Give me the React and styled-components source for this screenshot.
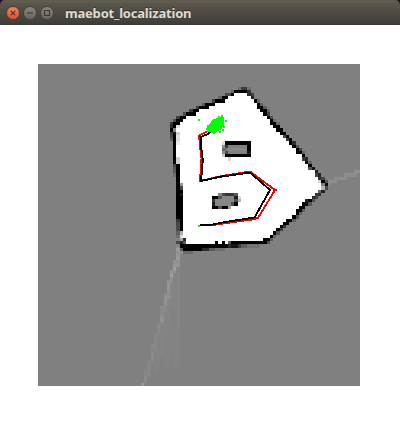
import React from "react";
import styled, { createGlobalStyle } from "styled-components";

const GlobalStyle = createGlobalStyle`
  html, body { margin: 0; background: #fff; }
`;

const Window = styled.main`
  display: flex;
  flex-direction: column;
  width: 400px;
  height: 425px;
  background: #fff;
  overflow: hidden;
`;

const TitleFrame = styled.div`
  flex: 0 0 25px;
  height: 25px;
  background: #240a25;
`;

const TitleBar = styled.header`
  display: flex;
  align-items: center;
  box-sizing: border-box;
  height: 25px;
  padding-left: 6px;
  border-radius: 5px 5px 0 0;
  background: linear-gradient(#5b584c 0, #646153 1px, #5a574c 3px, #3e3d38 24px, #363430 25px);
`;

const Controls = styled.div`
  display: flex;
  gap: 3px;
`;

const Control = styled.button`
  display: block;
  width: 14px;
  height: 14px;
  padding: 0;
  border: 1px solid #45433c;
  border-radius: 50%;
  background: ${(p) => (p.$close ? "linear-gradient(#f58059, #e4512a)" : "linear-gradient(#89867c, #68665e)")};
`;

const Glyph = styled.svg`
  display: block;
  width: 12px;
  height: 12px;
  fill: none;
  stroke: #3c3a35;
  stroke-width: 1.1;
`;

const Title = styled.h1`
  margin: 0 0 0 11px;
  color: #dfdbd2;
  font: 700 13px/20px "Noto Sans", "Open Sans", sans-serif;
  letter-spacing: ${(p) => p.$tracking}px;
  white-space: nowrap;
  text-shadow: 0 -1px 0 #33312c;
`;

const Viewport = styled.section`
  flex: 1;
  padding: 39px 40px 39px 38px;
`;

const MapCanvas = styled.svg`
  display: block;
  width: 322px;
  height: 322px;
  background: #808080;
`;

// Free space: [row, first column, last column]
const FREE = [
  [9, 60, 64], [10, 59, 65], [11, 58, 66], [12, 55, 67], [13, 53, 67], [14, 50, 68],
  [15, 49, 69], [16, 46, 70], [17, 45, 71], [18, 43, 71], [19, 43, 72], [20, 43, 73],
  [21, 43, 74], [22, 43, 75], [23, 43, 76], [24, 43, 77], [25, 43, 78], [26, 43, 79],
  [27, 43, 79], [28, 43, 81], [29, 43, 81], [30, 43, 82], [31, 44, 83], [32, 44, 84],
  [33, 44, 85], [34, 44, 85], [35, 44, 86], [36, 44, 87], [37, 44, 88], [38, 44, 88],
  [39, 44, 86], [40, 44, 85], [41, 44, 84], [42, 45, 82], [43, 45, 82], [44, 45, 80],
  [45, 45, 79], [46, 45, 79], [47, 45, 78], [48, 45, 76], [49, 45, 75], [50, 45, 74],
  [51, 45, 73], [52, 45, 72], [53, 45, 71], [54, 46, 69], [55, 46, 61],
];

// Shaded cells: [row, first column, last column, gray level]
const CELLS = [
  [7, 63, 64, 60], [7, 62, 62, 110], [7, 65, 65, 110],
  [8, 60, 60, 105], [8, 61, 64, 0], [8, 65, 65, 50],
  [9, 58, 59, 75], [9, 60, 60, 0], [9, 65, 65, 45], [9, 66, 66, 60],
  [10, 56, 56, 100], [10, 57, 58, 0], [10, 66, 66, 35],
  [11, 54, 54, 65], [11, 55, 57, 0], [11, 67, 67, 0], [11, 68, 68, 100],
  [12, 51, 51, 90], [12, 52, 54, 0], [12, 68, 68, 0], [12, 69, 69, 95],
  [13, 49, 49, 65], [13, 50, 52, 0], [13, 68, 69, 0], [13, 70, 70, 95],
  [14, 47, 47, 60], [14, 48, 49, 0], [14, 69, 70, 0], [14, 71, 71, 100],
  [15, 45, 45, 75], [15, 46, 48, 0], [15, 70, 70, 0], [15, 71, 71, 65],
  [16, 43, 43, 60], [16, 44, 45, 0], [16, 71, 71, 0], [16, 72, 72, 80],
  [17, 42, 42, 75], [17, 43, 44, 0], [17, 72, 72, 0], [17, 73, 73, 105],
  [18, 41, 41, 55], [18, 42, 43, 0], [18, 72, 73, 0], [18, 74, 74, 105],
  [19, 41, 41, 40], [19, 42, 42, 0], [19, 43, 43, 225], [19, 73, 74, 0],
  [20, 41, 41, 0], [20, 42, 42, 130], [20, 74, 75, 0],
  [21, 41, 41, 60], [21, 42, 42, 20], [21, 43, 43, 205], [21, 75, 76, 0],
  [22, 41, 41, 70], [22, 42, 42, 0], [22, 43, 43, 225], [22, 76, 76, 70], [22, 77, 77, 0],
  [23, 41, 41, 90], [23, 42, 42, 0], [23, 43, 43, 220], [23, 77, 77, 60], [23, 78, 78, 0],
  [24, 42, 42, 0], [24, 43, 43, 235], [24, 78, 78, 0], [24, 79, 79, 45],
  [25, 42, 42, 0], [25, 79, 79, 0], [25, 80, 80, 80],
  [26, 42, 42, 0], [26, 80, 80, 0], [26, 81, 81, 65],
  [27, 42, 42, 0], [27, 80, 81, 0], [27, 82, 82, 100],
  [28, 42, 42, 0], [28, 82, 82, 0],
  [29, 42, 42, 0], [29, 43, 43, 205], [29, 82, 82, 60], [29, 83, 83, 40],
  [30, 42, 42, 0], [30, 43, 43, 210], [30, 83, 83, 0], [30, 84, 84, 100],
  [31, 42, 42, 70], [31, 84, 84, 0],
  [32, 42, 42, 85], [32, 84, 84, 80], [32, 85, 85, 20],
  [33, 42, 42, 90], [33, 86, 86, 30],
  [34, 42, 42, 110], [34, 86, 86, 70], [34, 87, 87, 35],
  [35, 87, 87, 50], [35, 88, 88, 70],
  [36, 87, 87, 215], [36, 88, 88, 0], [36, 89, 89, 85],
  [37, 88, 88, 130], [37, 89, 89, 15], [38, 88, 88, 180], [38, 89, 89, 75],
  [39, 87, 87, 100], [39, 88, 88, 35], [40, 86, 86, 60], [40, 87, 87, 50],
  [41, 85, 85, 45], [41, 86, 86, 65], [42, 83, 83, 35], [42, 84, 84, 0], [42, 85, 85, 80],
  [43, 82, 83, 0], [43, 84, 84, 85], [44, 81, 82, 0], [45, 80, 81, 0], [45, 82, 82, 95],
  [46, 80, 80, 0], [46, 81, 81, 95], [47, 79, 79, 0], [47, 80, 80, 80],
  [48, 77, 78, 0], [48, 79, 79, 95], [49, 76, 77, 0], [50, 75, 75, 0], [50, 76, 76, 50],
  [51, 74, 74, 0], [51, 75, 75, 60], [52, 73, 73, 0], [52, 74, 74, 85],
  [53, 72, 72, 0], [53, 73, 73, 100], [54, 70, 71, 0], [54, 72, 72, 90],
  [31, 43, 43, 0], [32, 43, 43, 0], [33, 43, 43, 0], [34, 43, 43, 0], [35, 43, 43, 0], [36, 43, 43, 0],
  [37, 43, 43, 0], [37, 44, 44, 150], [38, 43, 43, 0], [38, 44, 44, 70],
  [39, 43, 44, 0], [40, 43, 43, 0], [40, 44, 44, 25], [41, 43, 44, 0],
  [42, 43, 44, 0], [43, 43, 44, 0], [44, 43, 44, 0], [45, 43, 44, 0], [46, 43, 44, 0], [47, 43, 44, 0],
  [48, 43, 43, 55], [48, 44, 44, 0], [49, 43, 43, 70], [49, 44, 44, 0],
  [50, 43, 43, 75], [50, 44, 44, 0], [51, 43, 43, 75], [51, 44, 44, 0],
  [52, 43, 43, 95], [52, 44, 44, 175], [53, 43, 43, 110], [53, 44, 44, 220],
  [54, 43, 43, 130], [54, 44, 44, 170], [54, 45, 45, 40],
  [55, 43, 43, 70], [55, 44, 44, 40], [55, 45, 45, 90],
  [55, 55, 55, 0], [55, 57, 57, 0], [55, 59, 59, 90], [55, 60, 70, 0], [55, 71, 71, 80],
  [56, 43, 43, 135], [56, 44, 58, 0], [56, 59, 59, 40], [56, 60, 61, 20], [56, 62, 62, 60], [56, 63, 64, 95], [56, 65, 68, 115],
  [57, 43, 43, 155], [57, 44, 44, 90], [57, 45, 50, 0], [57, 51, 52, 45], [57, 53, 54, 90], [57, 55, 57, 110],
  [58, 44, 44, 145], [58, 45, 47, 105],
  // upper obstacle
  [24, 57, 57, 225], [24, 58, 65, 0], [25, 57, 57, 140], [25, 58, 58, 60], [25, 59, 64, 128], [25, 65, 65, 0],
  [26, 57, 57, 105], [26, 58, 58, 120], [26, 59, 64, 136], [26, 65, 65, 0],
  [27, 57, 57, 140], [27, 58, 58, 75], [27, 59, 64, 128], [27, 65, 65, 25],
  [28, 57, 57, 205], [28, 58, 65, 0], [29, 59, 59, 212],
  // lower obstacle
  [40, 56, 56, 130], [40, 57, 57, 75], [40, 58, 60, 55], [40, 61, 61, 90],
  [41, 54, 55, 0], [41, 56, 56, 85], [41, 57, 60, 135], [41, 61, 61, 30], [41, 62, 62, 215],
  [42, 54, 54, 55], [42, 55, 60, 135], [42, 61, 61, 75], [42, 62, 62, 180],
  [43, 54, 54, 30], [43, 55, 59, 135], [43, 60, 60, 80], [43, 61, 61, 0],
  [44, 54, 55, 0], [44, 56, 56, 85], [44, 57, 58, 0], [44, 59, 59, 160],
];

// Faint sensor returns that leak outside the walls
const RAYS = [
  [57, 44, 44, 155], [58, 43, 44, 145], [59, 43, 43, 150], [60, 43, 43, 155], [61, 42, 43, 145],
  [62, 42, 43, 150], [63, 42, 42, 158], [64, 41, 42, 147], [65, 41, 41, 158], [66, 41, 41, 142],
  [67, 40, 41, 145], [68, 40, 40, 152], [69, 40, 40, 150], [70, 40, 40, 147], [71, 39, 40, 141],
  [72, 39, 40, 147], [73, 39, 39, 147], [74, 39, 39, 144], [75, 38, 39, 140], [76, 38, 39, 138],
  [77, 38, 38, 138], [78, 38, 38, 142], [79, 38, 38, 148], [80, 37, 38, 134], [81, 37, 37, 138],
  [82, 37, 37, 136], [83, 37, 37, 136], [84, 36, 37, 134], [85, 36, 36, 137], [86, 36, 36, 135],
  [87, 35, 36, 137], [88, 35, 36, 133], [89, 35, 35, 136], [90, 35, 35, 136], [91, 35, 35, 138],
  [92, 34, 35, 133], [93, 34, 34, 136], [94, 34, 34, 134], [95, 33, 34, 134], [96, 33, 34, 135],
  [97, 33, 33, 139], [98, 33, 33, 136], [99, 32, 32, 150],
  [37, 90, 90, 138], [36, 90, 92, 142], [35, 92, 95, 141], [34, 95, 98, 140], [33, 98, 99, 143],
];

// The haze beside the long ray: [column, first row, last row, gray level]
const HAZE = [
  [43, 62, 82, 132], [43, 83, 93, 131], [42, 64, 76, 132], [42, 77, 94, 130],
  [41, 67, 74, 134], [41, 75, 90, 130], [40, 72, 79, 133], [40, 80, 92, 131],
  [39, 76, 84, 132], [39, 85, 93, 130], [38, 81, 90, 132], [37, 84, 93, 131], [36, 88, 95, 131],
];

const PARTICLES = [
  [198, 119], [218, 116], [221, 115], [222, 117], [225, 120], [222, 119],
  [223, 126], [222, 129], [219, 131], [213, 132], [206, 128], [207, 125],
];

const Run = ({ run: [row, from, to, level = 255] }) => (
  <rect x={from} y={row} width={to - from + 1} height="1" fill={`rgb(${level},${level},${level})`} />
);

const OccupancyMap = () => (
  <MapCanvas viewBox="0 0 322 322" shapeRendering="crispEdges" role="img" aria-label="Occupancy map">
    <g transform="scale(3.22)">
      {HAZE.map(([col, from, to, level]) => (
        <rect key={`${col}-${from}`} x={col} y={from} width="1" height={to - from + 1} fill={`rgb(${level},${level},${level})`} />
      ))}
      {[...FREE, ...RAYS, ...CELLS].map((run, i) => <Run key={i} run={run} />)}
    </g>
    <g transform="translate(-38 -64)">
      <g fill="none" strokeWidth="1.9">
        <path stroke="#f00" d="M208 131L199 135.5L200.5 150L201.5 158L200 181L222 176L250 171.5L275 190L258 218L252 219.5L209 225.5M197.5 135.5H201M272.5 190H277M199 181H202" />
        <path stroke="#000" d="M211 131L208 134L200.5 137L201.5 150L202.8 160L201 181L222 176.5L250 172.5L270 190L254.5 217.5L225 222L210 225L199 225.5" />
      </g>
      <g fill="#0f0">
        <path d="M207 132V128L209 125L211 122L213 119H216V118H219V117H223V121H224V125L222 128L220 130L216 132V133H211V132Z" />
        <rect x="198" y="224.5" width="1.5" height="2" />
        {PARTICLES.map(([x, y]) => <rect key={`${x}-${y}`} x={x} y={y} width="2" height="2" />)}
      </g>
    </g>
  </MapCanvas>
);

export default function App() {
  return (
    <>
      <GlobalStyle />
      <Window>
        <TitleFrame>
          <TitleBar>
            <Controls>
              <Control $close aria-label="Close">
                <Glyph viewBox="0 0 12 12"><path d="M3.8 3.8L8.2 8.2M8.2 3.8L3.8 8.2" /></Glyph>
              </Control>
              <Control aria-label="Minimize">
                <Glyph viewBox="0 0 12 12"><path d="M3 6H9" /></Glyph>
              </Control>
              <Control aria-label="Maximize">
                <Glyph viewBox="0 0 12 12"><path d="M3.5 3.5H8.5V8.5H3.5Z" /></Glyph>
              </Control>
            </Controls>
            <Title $tracking={-0.2}>maebot_localization</Title>
          </TitleBar>
        </TitleFrame>
        <Viewport>
          <OccupancyMap />
        </Viewport>
      </Window>
    </>
  );
}
